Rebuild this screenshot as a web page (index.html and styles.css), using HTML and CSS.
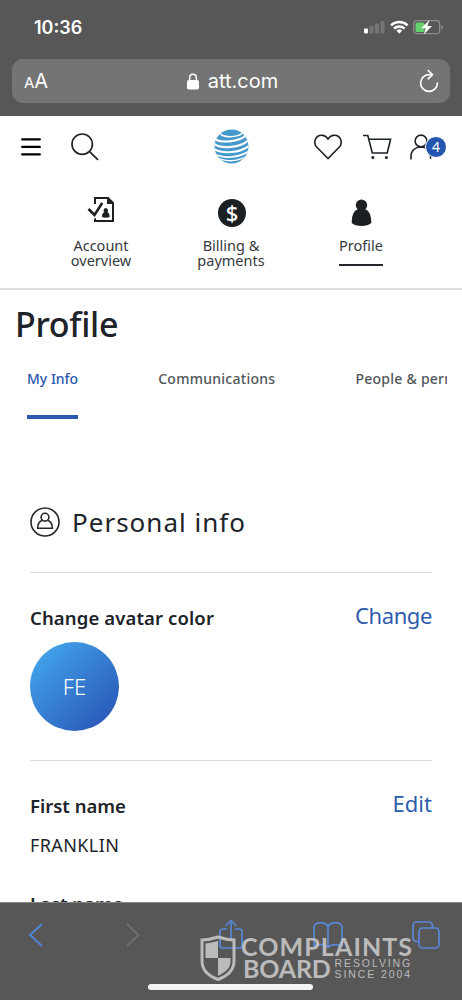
FILE: index.html
```html
<!DOCTYPE html>
<html lang="en">
  <head>
    <meta charset="UTF-8" />
    <meta name="viewport" content="width=device-width, initial-scale=1.0" />
    <title>Profile</title>
    <link rel="stylesheet" href="styles.css">
  </head>
  <body>
    <div class="phone">
      <div class="browser-top">
        <div class="status-bar">
          <span class="time">10:36</span>
          <svg class="status-icons" width="80" height="18" viewBox="0 0 80 18">
            <rect x="1" y="10.500" width="4" height="5" rx="1" fill="#fff" />
            <g fill="#757575">
              <rect x="6.500" y="8" width="4" height="7.500" rx="1" />
              <rect x="12" y="5.500" width="4" height="10" rx="1" />
              <rect x="17.500" y="3" width="4" height="12.500" rx="1" />
            </g>
            <g fill="none" stroke="#fff" stroke-width="2.400">
              <path d="M28 7.300a12 12 0 0 1 16.600 0" />
              <path d="M31 10.600a7.600 7.600 0 0 1 10.600 0" />
            </g>
            <path d="M33.400 12.600a4.200 4.200 0 0 1 5.800 0L36.300 15.700z" fill="#fff" />
            <rect x="50.700" y="2.700" width="26" height="13" rx="3.500" fill="none" stroke="#8e8e8e" stroke-width="1.200" />
            <rect x="52.500" y="4.500" width="9" height="9.500" rx="1.500" fill="#65d16c" />
            <path d="M78.300 7v4.500q1.500-.5 1.500-2.250T78.300 7z" fill="#8e8e8e" />
            <path d="M66.500 2l-8.500 8.300h4.700l-2 6.200 8.300-8.400h-4.600z" fill="#fff" />
          </svg>
        </div>
        <div class="address-bar">
          <span class="text-size"><small>A</small>A</span>
          <span class="site">
            <svg width="12" height="17" viewBox="0 0 12 17">
              <rect x="0" y="7" width="12" height="9.500" rx="1.800" fill="#fff" />
              <path d="M2.700 8V4.600a3.300 3.300 0 0 1 6.600 0V8" fill="none" stroke="#fff" stroke-width="1.500" />
            </svg>
            att.com
          </span>
          <svg class="reload" width="20" height="24" viewBox="0 0 20 24" fill="none" stroke="#fff" stroke-width="1.600" stroke-linecap="round" stroke-linejoin="round">
            <path d="M12.500 5.600H10A8.400 8.400 0 1 0 18.400 14" />
            <path d="M9.200 1.500l4.300 4.100-4.300 4.300" />
          </svg>
        </div>
      </div>

      <header class="site-header">
        <div class="tools">
          <svg class="menu" width="20" height="18" viewBox="0 0 20 18" stroke="#000" stroke-width="2.300" stroke-linecap="round">
            <path d="M1.200 1.400h17.600M1.200 8.900h17.600M1.200 16.400h17.600" />
          </svg>
          <svg class="search" width="28" height="28" viewBox="0 0 28 28" fill="none" stroke="#1d2329" stroke-width="1.700">
            <circle cx="11.200" cy="11.200" r="10.200" />
            <path d="M18.600 18.600l8.400 8.200" />
          </svg>
          <svg class="logo" width="35" height="35" viewBox="0 0 36 36">
            <clipPath id="globe"><circle cx="18" cy="18" r="17.500" /></clipPath>
            <g clip-path="url(#globe)">
              <rect width="36" height="36" fill="#4598cb" />
              <g fill="none" stroke="#fff">
                <path d="M7 3C4 9.500 27 9.500 29 3.500" stroke-width="1.500" />
                <path d="M0 9.500C6 15 26 13.500 33 6.500" stroke-width="2.200" />
                <path d="M-1 14.500C7 21.500 28 19 36 11" stroke-width="2.200" />
                <path d="M-1 20C8 26.500 28 24.500 37 16.500" stroke-width="2.200" />
                <path d="M-1 24.500C9 31.500 27 29.500 37 22" stroke-width="1.800" />
                <path d="M1 28.500C11 34.500 26 34 36 26.500" stroke-width="1.400" />
              </g>
            </g>
          </svg>
          <svg class="heart" width="28" height="26" viewBox="0 0 28 26" fill="none" stroke="#1d2329" stroke-width="1.600">
            <path d="M14 24.500L2.900 13.300C-.5 9.800.6 4.600 3.500 2.500 6.800.2 11.300 1 14 5 16.700 1 21.200.2 24.500 2.500c2.900 2.100 4 7.300.6 10.800z" />
          </svg>
          <svg class="cart" width="29" height="26" viewBox="0 0 29 26" fill="none" stroke="#1d2329" stroke-width="1.600">
            <path d="M0 1.500h4.800L9.300 19h14.900L27.600 5.300H5.800" />
            <circle cx="9.800" cy="23.600" r="1.500" fill="#1d2329" stroke="none" />
            <circle cx="23.400" cy="23.600" r="1.500" fill="#1d2329" stroke="none" />
          </svg>
          <div class="account">
            <svg width="24" height="26" viewBox="0 0 24 26" fill="none" stroke="#1d2329" stroke-width="1.600">
              <circle cx="11" cy="7" r="5.900" />
              <path d="M1 25.500v-3.200C1 16.500 5.200 13 11 13s9 3.500 9.500 9.300v2.500" />
            </svg>
            <span class="badge">4</span>
          </div>
        </div>

        <nav class="main-nav">
          <a href="#" class="nav-item">
            <svg width="28" height="32" viewBox="0 0 28 32" fill="none" stroke="#1d2023">
              <path d="M8 9V3h13l5 5v18H8v-5" stroke-width="2" />
              <path d="M20 2.500v6.500h6.500z" fill="#1d2023" stroke="none" />
              <path d="M1.500 14l6 6L15 8" stroke="#fff" stroke-width="5" />
              <path d="M1.500 14l6 6L15.200 8" stroke-width="2.600" />
              <path d="M18.800 13a2.600 2.600 0 0 1 1.600 4.300c1.900.6 2.200 2.300 2.200 4.700-2.200.9-5.400.9-7.600 0 0-2.400.3-4.100 2.200-4.700a2.600 2.600 0 0 1 1.600-4.300z" fill="#1d2023" stroke="none" />
            </svg>
            <span>Account<br>overview</span>
          </a>
          <a href="#" class="nav-item">
            <span class="nav-icon"><span class="dollar">$</span></span>
            <span>Billing &amp;<br>payments</span>
          </a>
          <a href="#" class="nav-item active">
            <svg width="28" height="32" viewBox="0 0 28 32" fill="#1d2023">
              <circle cx="14.500" cy="10.200" r="5.700" />
              <path d="M10.100 14.500h8.800c3.800 1.800 5.400 7 5.400 13.500-3.700 4-15.900 4-19.600 0 0-6.500 1.600-11.700 5.400-13.500z" />
            </svg>
            <span>Profile</span>
          </a>
        </nav>
      </header>

      <main class="content">
        <h1>Profile</h1>
        <div class="tabs">
          <a href="#" class="tab selected">My Info</a>
          <a href="#" class="tab communications">Communications</a>
          <a href="#" class="tab people">People &amp; permissions</a>
        </div>

        <section class="personal">
          <h2>
            <svg width="30" height="30" viewBox="0 0 30 30" fill="none" stroke="#24282c" stroke-width="1.600">
              <circle cx="15" cy="15" r="14" />
              <circle cx="15" cy="10.200" r="3.900" />
              <path d="M12.500 13.200C9 14.500 7.500 17 7.700 21.300h14.600c.2-4.300-1.300-6.800-4.800-8.100" />
            </svg>
            <span>Personal info</span>
          </h2>
          <div class="row avatar-row">
            <div class="row-head">
              <h3 class="avatar-title">Change avatar color</h3>
              <a href="#">Change</a>
            </div>
            <div class="avatar">FE</div>
          </div>
          <div class="row">
            <div class="row-head">
              <h3>First name</h3>
              <a href="#" class="edit">Edit</a>
            </div>
            <p>FRANKLIN</p>
            <h3>Last name</h3>
          </div>
        </section>
      </main>

      <footer class="browser-bottom">
        <div class="toolbar">
          <svg width="16" height="28" viewBox="0 0 16 28" fill="none" stroke="#5287df" stroke-width="1.800" stroke-linecap="round">
            <path d="M13.500 3.500L2 14l11.500 10.500" />
          </svg>
          <svg width="16" height="28" viewBox="0 0 16 28" fill="none" stroke="#707070" stroke-width="1.800" stroke-linecap="round">
            <path d="M2.500 3.500L13.500 14l-11 10.500" />
          </svg>
          <svg width="26" height="32" viewBox="0 0 26 32" fill="none" stroke="#5a87d8" stroke-width="1.700" stroke-linecap="round" stroke-linejoin="round">
            <path d="M8.500 10H4.500a2.500 2.500 0 0 0-2.500 2.500v14a2.500 2.500 0 0 0 2.500 2.500h17a2.500 2.500 0 0 0 2.500-2.500v-14a2.500 2.500 0 0 0-2.500-2.500h-4" />
            <path d="M13 19V2M8 6.500l5-5 5 5" />
          </svg>
          <svg width="32" height="28" viewBox="0 0 32 28" fill="none" stroke="#5a87d8" stroke-width="1.700" stroke-linejoin="round">
            <path d="M16 5.500C13.500 1 6 .5 3 3.500Q2 4.500 2 6v18.500q0 1.500 1.500.5C7 23 13 23 16 26.500 19 23 25 23 28.500 25q1.500 1 1.500-.5V6q0-1.500-1-2.500C26 .5 18.500 1 16 5.500zM16 5.500v21" />
          </svg>
          <svg width="30" height="30" viewBox="0 0 30 30" fill="none" stroke="#5a87d8" stroke-width="1.700">
            <path d="M8 21.500H5.500A3.500 3.500 0 0 1 2 18V5.500A3.500 3.500 0 0 1 5.500 2H18a3.500 3.500 0 0 1 3.500 3.500V8" />
            <rect x="8" y="8" width="20" height="20" rx="3.500" />
          </svg>
        </div>
        <div class="home-line"></div>
        <div class="watermark">
          <svg width="36" height="46" viewBox="0 0 36 46">
            <path d="M18 2C12.500 3.800 7 4.800 2 5v21c0 9 7 15.200 16 18.500C27 41.200 34 35 34 26V5C29 4.800 23.500 3.800 18 2z" fill="none" stroke="#c6c6c6" stroke-width="3" />
            <path d="M18 6c-4 1.300-8 2-12.500 2.400V23H18z" fill="#c6c6c6" />
            <path d="M18 23h12.500v3c0 7-5 11.500-12.500 14.800z" fill="#c6c6c6" />
          </svg>
          <div class="brand">
            <div class="brand-top">COMPLAINTS</div>
            <div class="brand-row">
              <span class="brand-bottom">BOARD</span>
              <span class="since"><span>RESOLVING</span><span class="year">SINCE 2004</span></span>
            </div>
          </div>
        </div>
      </footer>
    </div>
  </body>
</html>
```
FILE: styles.css
```css
* {
  box-sizing: border-box;
}
body {
  margin: 0;
  background: #fff;
  color: #1d2329;
  font-family: "Noto Sans", sans-serif;
}
a {
  text-decoration: none;
  color: inherit;
}
h1,
h2,
h3,
p {
  margin: 0;
}
svg {
  display: block;
  flex: none;
}
.phone {
  display: flex;
  flex-direction: column;
  width: 462px;
  height: 1000px;
  overflow: hidden;
}

/* Browser bars */
.browser-top {
  flex: none;
  height: 116px;
  padding: 18px 12px 0;
  background: #575757;
  color: #fff;
  font-family: Inter, sans-serif;
}
.status-bar {
  display: flex;
  justify-content: space-between;
  height: 41px;
  padding: 0 7px 0 22px;
}
.time {
  font-size: 18px;
  font-weight: 600;
  line-height: 20px;
}
.address-bar {
  display: flex;
  align-items: center;
  justify-content: space-between;
  height: 44px;
  padding: 0 11px 0 12px;
  border-radius: 11px;
  background: #747474;
}
.text-size {
  width: 22px;
  font-size: 20px;
  white-space: nowrap;
}
.text-size small {
  font-size: 15px;
}
.site {
  display: flex;
  align-items: center;
  gap: 9px;
  font-size: 20px;
}

/* Header */
.site-header {
  flex: none;
  height: 174px;
  border-bottom: 2px solid #dcdcdc;
}
.tools {
  display: flex;
  align-items: center;
  height: 61px;
  padding-left: 21px;
}
.search {
  margin-left: 30px;
}
.logo {
  margin-left: 115px;
}
.heart {
  margin-left: 65px;
}
.cart {
  margin-left: 21px;
}
.account {
  position: relative;
  margin-left: 18px;
}
.badge {
  position: absolute;
  left: 15px;
  top: 2px;
  width: 22px;
  height: 22px;
  border: 1px solid #fff;
  border-radius: 50%;
  background: #2456b0;
  color: #fff;
  font-size: 14px;
  line-height: 20px;
  text-align: center;
}
.main-nav {
  display: grid;
  grid-template-columns: repeat(3, 130px);
  justify-content: center;
  padding-top: 18px;
}
.nav-item {
  display: flex;
  flex-direction: column;
  align-items: center;
  gap: 11px;
  color: #35393d;
  font-size: 14.5px;
  line-height: 15px;
  text-align: center;
}
.nav-icon {
  display: flex;
  align-items: flex-end;
  height: 32px;
}
.dollar {
  width: 28px;
  height: 28px;
  margin-left: 2px;
  border-radius: 50%;
  background: #1d2023;
  color: #fff;
  font-size: 22px;
  font-weight: 500;
  line-height: 27px;
}
.active span {
  padding-bottom: 11px;
  border-bottom: 2px solid #24282c;
}

/* Profile page */
.content {
  flex: 1;
  min-height: 0;
  overflow: hidden;
  padding: 11px 15px 0;
}
h1 {
  font-size: 34px;
  font-weight: 500;
  line-height: 46px;
  letter-spacing: -0.3px;
}
.tabs {
  display: flex;
  gap: 80px;
  height: 72px;
  padding: 21px 0 0 12px;
  overflow: hidden;
  white-space: nowrap;
}
.tab {
  flex: none;
  height: 51px;
  color: #50555a;
  font-size: 14px;
  font-weight: 500;
  line-height: 22px;
}
.communications {
  letter-spacing: 0.27px;
}
.people {
  letter-spacing: 0.25px;
}
.selected {
  border-bottom: 4px solid #2b57ac;
  color: #2b57ac;
}
.personal {
  padding: 80px 15px 0;
}
h2 {
  display: flex;
  align-items: center;
  gap: 12px;
  height: 73px;
  padding-bottom: 28px;
  font-size: 26px;
  font-weight: 400;
  letter-spacing: 1px;
}
.row {
  padding-top: 29px;
  border-top: 1px solid #dcdcdc;
}
.avatar-row {
  height: 188px;
}
.row-head {
  display: flex;
  justify-content: space-between;
}
.row-head a {
  color: #2f5cab;
  font-size: 22px;
  line-height: 26px;
  letter-spacing: -0.4px;
}
.row-head .edit {
  letter-spacing: 0;
}
h3 {
  font-size: 18.5px;
  font-weight: 600;
  line-height: 31px;
}
.avatar-title {
  letter-spacing: 0.12px;
}
.avatar {
  width: 89px;
  height: 89px;
  margin-top: 9px;
  border-radius: 50%;
  background: linear-gradient(135deg, #42a3ea 10%, #2a58b9 90%);
  color: #fff;
  font-size: 22px;
  font-weight: 300;
  line-height: 89px;
  text-align: center;
}
p {
  margin: 10px 0 29px;
  font-size: 18px;
  line-height: 28px;
  letter-spacing: 0.4px;
}

.browser-bottom {
  position: relative;
  flex: none;
  height: 98px;
  background: #575757;
  border-top: 1px solid #858585;
}
.toolbar {
  display: grid;
  grid-template-columns: repeat(5, 97.500px);
  align-items: center;
  justify-items: center;
  margin-left: -13px;
  padding-top: 16px;
}
.home-line {
  position: absolute;
  left: 148px;
  bottom: 10px;
  width: 165px;
  height: 6px;
  border-radius: 3px;
  background: #f4f4f4;
}
/* Stamp over the toolbar */
.watermark {
  position: absolute;
  left: 200px;
  top: 32px;
  display: flex;
  gap: 5px;
  color: #c6c6c6;
  font-family: Lato, sans-serif;
  opacity: 0.9;
}
.brand-top {
  font-size: 25px;
  font-weight: 700;
  line-height: 22px;
  letter-spacing: 1.1px;
}
.brand-row {
  display: flex;
  gap: 4px;
}
.brand-bottom {
  padding-left: 2px;
  font-size: 25px;
  font-weight: 700;
  line-height: 23px;
  letter-spacing: -0.2px;
}
.since {
  display: flex;
  flex-direction: column;
  padding-top: 1px;
  font-family: "Liberation Sans", sans-serif;
  font-size: 10.5px;
  line-height: 11px;
  letter-spacing: 1.9px;
}
.year {
  letter-spacing: 1.9px;
}
```
